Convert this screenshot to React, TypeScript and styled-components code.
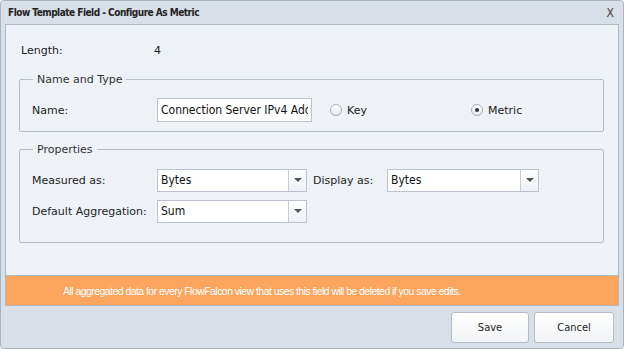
import React from 'react';
import styled, { createGlobalStyle } from 'styled-components';

const GlobalStyle = createGlobalStyle`
  html, body { margin: 0; padding: 0; background: #ffffff; }
  body { font-family: "DejaVu Sans", Tahoma, sans-serif; }
  * { box-sizing: border-box; }
`;

const Dialog = styled.div`
  width: 624px;
  height: 349px;
  display: flex;
  flex-direction: column;
  background: #d8dfe7;
  border: 1px solid #a9b3c0;
  border-radius: 4px;
  overflow: hidden;
`;

const TitleBar = styled.div`
  height: 23px;
  display: flex;
  align-items: center;
  justify-content: space-between;
  padding: 0 9px 0 7px;
  font-family: "DejaVu Sans Condensed", "DejaVu Sans", sans-serif;
  font-weight: bold;
  font-size: 10px;
  letter-spacing: -0.5px;
  color: #222;
`;

const Close = styled.span`
  font-weight: normal;
  font-size: 12px;
  letter-spacing: 0;
  color: #444;
`;

const Body = styled.div`
  margin: 0 4px;
  height: 251px;
  background: #eef2f6;
  border: 1px solid #afbac7;
  border-bottom: none;
  padding: 13px 14px 0 13px;
  font-size: 11px;
  color: #222;
`;

const Row = styled.div<{ gap?: number; indent?: number }>`
  display: flex;
  align-items: center;
  height: 24px;
  margin-bottom: ${({ gap }) => gap ?? 0}px;
  padding-left: ${({ indent }) => indent ?? 0}px;
`;

const Label = styled.span<{ w: number }>`
  width: ${({ w }) => w}px;
  flex: none;
`;

const Fieldset = styled.fieldset<{ h: number }>`
  margin: 0 0 11px 0;
  padding: 12px 11px 0 12px;
  height: ${({ h }) => h}px;
  border: 1px solid #b6becb;
  border-radius: 2px;
  min-width: 0;
`;

const Legend = styled.legend`
  padding: 0 4px;
  margin-left: 1px;
  font-size: 11px;
  color: #333;
`;

const TextInput = styled.input`
  width: 155px;
  height: 24px;
  border: 1px solid #b9c2cd;
  background: #fff;
  padding: 0 3px;
  font-family: "DejaVu Sans Condensed", "DejaVu Sans", sans-serif;
  font-size: 12px;
  color: #111;
  outline: none;
`;

const Radio = styled.label<{ w: number }>`
  display: flex;
  align-items: center;
  gap: 5px;
  width: ${({ w }) => w}px;
`;

const RadioDot = styled.span<{ on?: boolean }>`
  width: 12px;
  height: 12px;
  border-radius: 50%;
  border: 1px solid #a7afba;
  background: linear-gradient(#ffffff, #e6e9ed);
  display: flex;
  align-items: center;
  justify-content: center;
  &::after {
    content: '';
    width: 4px;
    height: 4px;
    border-radius: 50%;
    background: #333;
    display: ${({ on }) => (on ? 'block' : 'none')};
  }
`;

const Select = styled.div<{ w: number }>`
  width: ${({ w }) => w}px;
  height: 23px;
  display: flex;
  border: 1px solid #b9c2cd;
  background: #fff;
  flex: none;
`;

const SelectValue = styled.span`
  flex: 1;
  display: flex;
  align-items: center;
  padding-left: 3px;
  font-family: "DejaVu Sans Condensed", "DejaVu Sans", sans-serif;
  font-size: 12px;
  color: #111;
`;

const SelectArrow = styled.span`
  width: 18px;
  border-left: 1px solid #c6cdd6;
  background: linear-gradient(#ffffff, #eef0f3);
  display: flex;
  align-items: center;
  justify-content: center;
  &::after {
    content: '';
    border-left: 4px solid transparent;
    border-right: 4px solid transparent;
    border-top: 4px solid #555;
  }
`;

const Banner = styled.div`
  margin: 0 4px;
  height: 31px;
  background: #fba55f;
  border: 1px solid #afbac7;
  display: flex;
  align-items: center;
  padding-left: 57px;
  font-family: "Liberation Sans", Arial, sans-serif;
  font-size: 10.5px;
  letter-spacing: -0.55px;
  color: #fff;
`;

const Footer = styled.div`
  display: flex;
  justify-content: flex-end;
  gap: 5px;
  padding: 6px 9px 0 0;
`;

const Button = styled.button<{ w: number }>`
  width: ${({ w }) => w}px;
  height: 31px;
  border: 1px solid #b4bcc7;
  border-radius: 3px;
  background: linear-gradient(#ffffff, #f1f3f5);
  font-family: "DejaVu Sans Condensed", "DejaVu Sans", sans-serif;
  font-size: 11px;
  color: #222;
`;

const SelectBox: React.FC<{ w: number; value: string }> = ({ w, value }) => (
  <Select w={w}>
    <SelectValue>{value}</SelectValue>
    <SelectArrow />
  </Select>
);

export default function App() {
  return (
    <>
      <GlobalStyle />
      <Dialog>
        <TitleBar>
          <span>Flow Template Field - Configure As Metric</span>
          <Close>X</Close>
        </TitleBar>
        <Body>
          <Row gap={11} indent={2}>
            <Label w={133}>Length:</Label>
            <span>4</span>
          </Row>
          <Fieldset h={59}>
            <Legend>Name and Type</Legend>
            <Row>
              <Label w={125}>Name:</Label>
              <TextInput value="Connection Server IPv4 Address" readOnly />
              <span style={{ width: 18 }} />
              <Radio w={141}>
                <RadioDot />
                Key
              </Radio>
              <Radio w={80}>
                <RadioDot on />
                Metric
              </Radio>
            </Row>
          </Fieldset>
          <Fieldset h={100}>
            <Legend>Properties</Legend>
            <Row gap={7}>
              <Label w={125}>Measured as:</Label>
              <SelectBox w={150} value="Bytes" />
              <Label w={80} style={{ paddingLeft: 6 }}>Display as:</Label>
              <SelectBox w={152} value="Bytes" />
            </Row>
            <Row>
              <Label w={125}>Default Aggregation:</Label>
              <SelectBox w={150} value="Sum" />
            </Row>
          </Fieldset>
        </Body>
        <Banner>All aggregated data for every FlowFalcon view that uses this field will be deleted if you save edits.</Banner>
        <Footer>
          <Button w={78}>Save</Button>
          <Button w={80}>Cancel</Button>
        </Footer>
      </Dialog>
    </>
  );
}
